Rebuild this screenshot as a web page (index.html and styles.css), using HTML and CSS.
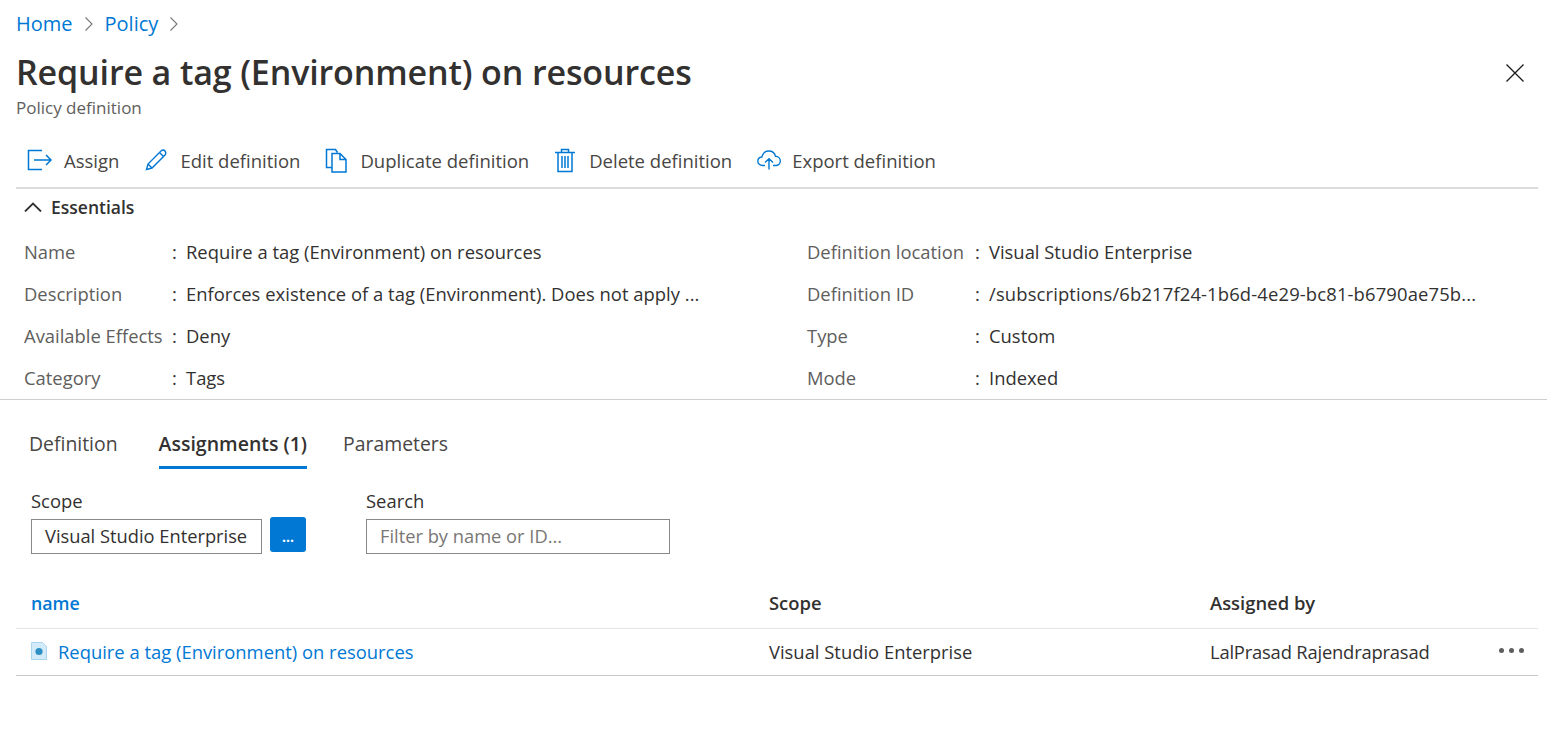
FILE: index.html
```html
<!DOCTYPE html>
<html lang="en">
<head>
<meta charset="utf-8">
<title>Require a tag (Environment) on resources</title>
<link rel="stylesheet" href="styles.css">
</head>
<body>
<div class="page">
  <nav class="crumbs">
    <a class="link">Home</a>
    <svg class="chev" width="10" height="16" viewBox="0 0 10 16"><path d="M1.500 1.500 8 8l-6.500 6.500" fill="none" stroke="#797775" stroke-width="1.100"/></svg>
    <a class="link">Policy</a>
    <svg class="chev" width="10" height="16" viewBox="0 0 10 16"><path d="M1.500 1.500 8 8l-6.500 6.500" fill="none" stroke="#797775" stroke-width="1.100"/></svg>
  </nav>
  <header class="head">
    <div>
      <h1 class="title">Require a tag (Environment) on resources</h1>
      <div class="subtitle">Policy definition</div>
    </div>
    <svg class="close" width="20" height="20" viewBox="0 0 20 20"><path d="M1.500 1.500l17 17M18.500 1.500l-17 17" fill="none" stroke="#1b1a19" stroke-width="1.300"/></svg>
  </header>
  <div class="toolbar">
    <div class="tool t1">
      <svg width="26" height="22" viewBox="0 0 26 22"><path d="M15 1.500H1.500v19H15M7 11h17M19 6l5 5-5 5" fill="none" stroke="#0078d4" stroke-width="1.500"/></svg>
      <span>Assign</span>
    </div>
    <div class="tool t2">
      <svg width="22" height="22" viewBox="0 0 22 22"><path d="M1.500 20.500l1.500-5.500L16 2c1.500-1.500 3-1.300 4 0s1.200 2.500 0 4L7 19zM3 15l4 4M14.500 3.500l4 4" fill="none" stroke="#0078d4" stroke-width="1.400"/></svg>
      <span>Edit definition</span>
    </div>
    <div class="tool t3">
      <svg width="22" height="25" viewBox="0 0 22 25"><path d="M7 19.500H1.500v-18h9l2 3M7 5.500h8l6 6v12.500H7zM15 5.500v6h6" fill="none" stroke="#0078d4" stroke-width="1.500"/></svg>
      <span>Duplicate definition</span>
    </div>
    <div class="tool t4">
      <svg width="20" height="25" viewBox="0 0 20 25"><path d="M0 4.500h20M3 4.500v19h14v-19M6.500 4.500V1.500h7v3M7 8v12M10 8v12M13 8v12" fill="none" stroke="#0078d4" stroke-width="1.500"/></svg>
      <span>Delete definition</span>
    </div>
    <div class="tool t5">
      <svg width="24" height="20" viewBox="0 0 24 20"><path d="M8 15.500H5.500C3 15.500.8 13.700.8 11.200c0-2.300 1.800-4 4-4.200C5.800 3.500 8.500 1 11.800 1c3.400 0 6 2.300 6.700 5.300 2.800 0 4.800 2.200 4.800 4.700 0 2.500-2 4.500-4.600 4.500H16M12 19.500V9M8 12.500 12 8.800l4 3.700" fill="none" stroke="#0078d4" stroke-width="1.400"/></svg>
      <span>Export definition</span>
    </div>
  </div>
  <div class="essentials-head">
    <svg width="18" height="10" viewBox="0 0 18 10"><path d="M1 9.500 9 1.500l8 8" fill="none" stroke="#323130" stroke-width="1.800"/></svg>
    <span>Essentials</span>
  </div>
  <div class="essentials">
    <div class="col col-left">
      <div class="row"><span class="k">Name</span><span class="c">:</span><span class="v">Require a tag (Environment) on resources</span></div>
      <div class="row"><span class="k">Description</span><span class="c">:</span><span class="v v-desc">Enforces existence of a tag (Environment). Does not apply ...</span></div>
      <div class="row"><span class="k">Available Effects</span><span class="c">:</span><span class="v">Deny</span></div>
      <div class="row"><span class="k">Category</span><span class="c">:</span><span class="v">Tags</span></div>
    </div>
    <div class="col col-right">
      <div class="row"><span class="k">Definition location</span><span class="c">:</span><span class="v">Visual Studio Enterprise</span></div>
      <div class="row"><span class="k">Definition ID</span><span class="c">:</span><span class="v v-id">/subscriptions/6b217f24-1b6d-4e29-bc81-b6790ae75b...</span></div>
      <div class="row"><span class="k">Type</span><span class="c">:</span><span class="v">Custom</span></div>
      <div class="row"><span class="k">Mode</span><span class="c">:</span><span class="v">Indexed</span></div>
    </div>
  </div>
</div>
<div class="rule"></div>
<div class="page">
  <div class="tabs">
    <div class="tab">Definition</div>
    <div class="tab active">Assignments (1)</div>
    <div class="tab">Parameters</div>
  </div>
  <div class="filters">
    <div class="field scope">
      <label class="lbl">Scope</label>
      <div class="scope-row">
        <div class="input scope-input">Visual Studio Enterprise</div>
        <button class="more">...</button>
      </div>
    </div>
    <div class="field search">
      <label class="lbl">Search</label>
      <div class="input search-input">Filter by name or ID...</div>
    </div>
  </div>
  <div class="table">
    <div class="tr th">
      <div class="td name link">name</div>
      <div class="td scope-col">Scope</div>
      <div class="td by">Assigned by</div>
    </div>
    <div class="tr body">
      <div class="td name link">
        <svg width="16" height="18" viewBox="0 0 16 18"><path d="M.5.500h11l4 4v13H.5z" fill="#d3ebf8" stroke="#a9d6ee"/><circle cx="8" cy="9.500" r="3.600" fill="#2e8fc4"/></svg>
        <span>Require a tag (Environment) on resources</span>
      </div>
      <div class="td scope-col">Visual Studio Enterprise</div>
      <div class="td by by-val">LalPrasad Rajendraprasad</div>
      <div class="dots"><i></i><i></i><i></i></div>
    </div>
  </div>
</div>
</body>
</html>
```
FILE: styles.css
```css
* { box-sizing: border-box; }
html, body { margin: 0; padding: 0; background: #fff; }
body {
  font-family: "Open Sans", "Liberation Sans", sans-serif;
  font-size: 18.400px;
  color: #323130;
  overflow: hidden;
  height: 743px;
}
.page { padding: 0 9px 0 16px; }
.link { color: #0078d4; }
.crumbs { display: flex; align-items: center; height: 47px; font-size: 20px; }
.crumbs .chev { margin: 0 11px; }
.head { display: flex; justify-content: space-between; align-items: flex-start; height: 78px; }
.title { margin: 0; font-size: 34px; font-weight: 600; line-height: 51px; height: 49px; letter-spacing: -.13px; }
.subtitle { font-size: 17px; line-height: 24px; color: #605e5c; }
.close { margin: 16px 13px 0 0; }
.toolbar { display: flex; align-items: center; height: 64px; padding: 8px 0 0 11px; border-bottom: 2px solid #dcdcdc; color: #484644; font-size: 18.500px; }
.tool { display: flex; align-items: center; }
.tool span { white-space: nowrap; }
.t1 svg { margin-right: 11px; }
.t1 { margin-right: 26px; }
.t2 svg { margin-right: 13px; }
.t2 { margin-right: 25px; }
.t3 svg { margin-right: 13px; }
.t3 { margin-right: 26px; }
.t4 svg { margin-right: 14px; }
.t4 { margin-right: 25px; }
.t5 svg { margin-right: 11px; }
.essentials-head { display: flex; align-items: center; height: 36px; padding-left: 8px; font-weight: 600; font-size: 17.500px; gap: 9px; }
.essentials { display: grid; grid-template-columns: 783px 1fr; padding: 5px 0 1px 8px; }
.row { display: flex; height: 42px; align-items: center; white-space: nowrap; }
.k { color: #605e5c; }
.col-left .k { width: 148px; }
.col-right .k { width: 168px; }
.c { width: 14px; color: #323130; }
.v-id { letter-spacing: .15px; }
.v-desc { letter-spacing: .03px; }
.rule { height: 1px; background: #cfcfcf; }
.tabs { display: flex; height: 69px; padding: 26px 0 0 13px; gap: 41px; color: #484644; font-size: 19.400px; }
.tab { height: 43px; padding-top: 5px; border-bottom: 3px solid transparent; line-height: 26px; white-space: nowrap; }
.tab.active { border-bottom-color: #0078d4; color: #323130; font-weight: 600; font-size: 19.500px; margin-right: -5px; }
.filters { display: flex; padding: 20px 0 0 15px; height: 110px; }
.lbl { display: block; line-height: 24px; height: 30px; }
.field.scope { width: 335px; }
.scope-row { display: flex; align-items: flex-start; gap: 8px; margin-top: -2px; }
.input { border: 1px solid #8a8886; height: 35px; line-height: 31px; padding-left: 13px; white-space: nowrap; }
.scope-input { width: 231px; margin-top: 2px; font-size: 18.300px; }
.search-input { width: 304px; color: #797775; font-size: 18.300px; line-height: 32px; }
.more { width: 36px; height: 35px; background: #0078d4; border: 0; border-radius: 3px; color: #fff; font: 700 14px "Open Sans", sans-serif; padding: 4px 0 0; }
.tr { display: flex; align-items: center; position: relative; }
.th { height: 50px; border-bottom: 1px solid #e5e5e5; font-weight: 600; padding-bottom: 3px; }
.body { height: 47px; border-bottom: 1px solid #c8c8c8; padding-bottom: 2px; }
.td { white-space: nowrap; }
.name { width: 753px; padding-left: 15px; display: flex; align-items: center; gap: 11px; }
.th .name { font-weight: 600; font-size: 17.800px; padding-top: 2px; }
.scope-col { width: 441px; }
.by-val { letter-spacing: -.2px; }
.dots { position: absolute; right: 14px; top: 19px; display: flex; gap: 5px; }
.dots i { width: 5px; height: 5px; border-radius: 50%; background: #605e5c; }
```
